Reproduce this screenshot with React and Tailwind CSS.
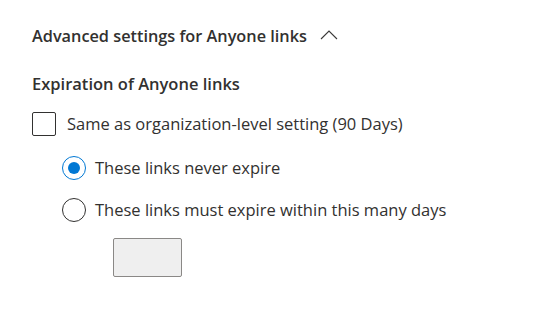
import React, { useState } from 'react';

const Radio = ({ checked, label, onClick }) => (
    <label onClick={onClick} className="flex items-center h-[30px] cursor-pointer">
        <span className={`w-[24px] h-[24px] rounded-full border flex items-center justify-center bg-white ${checked ? 'border-[#0078d4]' : 'border-[#323130]'}`}>
            {checked && <span className="w-[12px] h-[12px] rounded-full bg-[#0078d4]" />}
        </span>
        <span className="ml-[9px] text-[16.5px] text-[#323130]">{label}</span>
    </label>
);

const App = () => {
    const [never, setNever] = useState(true);
    const [same, setSame] = useState(false);

    return (
        <div className="w-[537px] h-[319px] bg-white pl-[32px] pt-[24px]" style={{ fontFamily: '"Open Sans", "Noto Sans", sans-serif' }}>
            {/* Section header */}
            <div className="flex items-center h-[24px] text-[#323130]">
                <span className="text-[16.3px] font-semibold">Advanced settings for Anyone links</span>
                <svg className="ml-[13px] mt-[-3px]" width="18" height="11" viewBox="0 0 18 11" fill="none">
                    <path d="M1 10 L9 2 L17 10" stroke="#3b3a39" strokeWidth="1.1" />
                </svg>
            </div>

            <div className="mt-[24px] h-[24px] flex items-center text-[16.5px] font-semibold text-[#323130]">
                Expiration of Anyone links
            </div>

            {/* Checkbox */}
            <label className="mt-[15px] flex items-center h-[26px] cursor-pointer" onClick={() => setSame(!same)}>
                <span className="w-[24px] h-[24px] border border-[#323130] rounded-[2px] bg-white" />
                <span className="ml-[11px] text-[16.5px] text-[#323130]">Same as organization-level setting (90 Days)</span>
            </label>

            <div className="pl-[30px] flex flex-col">
                <div className="mt-[16px]">
                    <Radio checked={never} label="These links never expire" onClick={() => setNever(true)} />
                </div>
                <div className="mt-[12px]">
                    <Radio checked={!never} label="These links must expire within this many days" onClick={() => setNever(false)} />
                </div>
                <div className="pl-[51px] mt-[13px]">
                    <input type="text" disabled className="w-[69px] h-[39px] bg-[#efefef] border border-[#8a8886] rounded-[2px]" />
                </div>
            </div>
        </div>
    );
};

export default App;
